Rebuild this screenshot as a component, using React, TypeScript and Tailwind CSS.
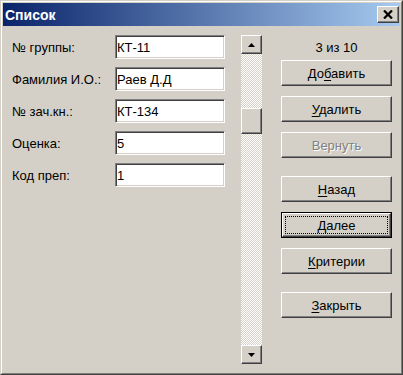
const raised =
  "border border-t-white border-l-white border-r-[#404040] border-b-[#404040] shadow-[inset_-1px_-1px_#808080] bg-[#d4d0c8]";
const sunken =
  "border border-t-[#808080] border-l-[#808080] border-r-white border-b-white shadow-[inset_1px_1px_#404040,inset_-1px_-1px_#d4d0c8] bg-white";

const fields = [
  { label: "№ группы:", value: "КТ-11" },
  { label: "Фамилия И.О.:", value: "Раев Д.Д" },
  { label: "№ зач.кн.:", value: "КТ-134" },
  { label: "Оценка:", value: "5" },
  { label: "Код преп:", value: "1" },
];

function Btn({
  pre,
  key_,
  post,
  mt,
  disabled,
  isDefault,
}: {
  pre: string;
  key_: string;
  post: string;
  mt: string;
  disabled?: boolean;
  isDefault?: boolean;
}) {
  if (isDefault) {
    return (
      <div className={`${mt} h-[26px] w-[111px] border border-black`}>
        <div className={`${raised} h-full w-full p-[2px]`}>
          <div className="h-full w-full border border-dotted border-black flex items-center justify-center">
            <span>
              {pre}
              <span className="underline underline-offset-2">{key_}</span>
              {post}
            </span>
          </div>
        </div>
      </div>
    );
  }
  return (
    <div className={`${raised} ${mt} h-[26px] w-[111px] flex items-center justify-center`}>
      {disabled ? (
        <span className="text-[#808080] [text-shadow:1px_1px_0_#fff]">
          {pre}
          {key_}
          {post}
        </span>
      ) : (
        <span>
          {pre}
          <span className="underline underline-offset-2">{key_}</span>
          {post}
        </span>
      )}
    </div>
  );
}

function Arrow({ up }: { up?: boolean }) {
  return (
    <svg width="7" height="4" viewBox="0 0 7 4">
      {up ? <polygon points="3.5,0 7,4 0,4" fill="#000" /> : <polygon points="0,0 7,0 3.5,4" fill="#000" />}
    </svg>
  );
}

export default function App() {
  return (
    <div className="w-[403px] h-[375px] bg-[#d4d0c8] border border-t-[#d4d0c8] border-l-[#d4d0c8] border-r-[#404040] border-b-[#404040] font-['Liberation_Sans',Arial,sans-serif] text-[13px] text-black leading-none">
      <div className="h-full border border-t-white border-l-white border-r-[#808080] border-b-[#808080] p-px flex flex-col">
        {/* title bar */}
        <div className="h-[23px] flex items-center justify-between pl-[2px] pr-[1px] bg-[linear-gradient(to_right,#0a246a,#a6caf0)]">
          <span className="text-white font-bold text-[14px]">Список</span>
          <div className={`${raised} w-[22px] h-[17px] flex items-center justify-center`}>
            <svg width="10" height="9" viewBox="0 0 10 9">
              <path d="M1 0.5 L9 8.5 M9 0.5 L1 8.5" stroke="#000" strokeWidth="2.2" />
            </svg>
          </div>
        </div>

        {/* body */}
        <div className="flex pt-[9px] pl-[9px]">
          <div className="flex flex-col gap-[8px]">
            {fields.map((f) => (
              <div key={f.label} className="flex items-center h-[24px]">
                <span className="w-[103px]">{f.label}</span>
                <div className={`${sunken} w-[110px] h-[24px] pl-px flex items-center`}>{f.value}</div>
              </div>
            ))}
          </div>

          {/* scrollbar */}
          <div className="ml-[16px] w-[21px] h-[329px] flex flex-col">
            <div className={`${raised} h-[19px] flex items-center justify-center`}>
              <Arrow up />
            </div>
            <div className="flex-1 flex flex-col bg-[repeating-conic-gradient(#ffffff_0_25%,#d4d0c8_0_50%)] bg-[length:2px_2px]">
              <div className="h-[54px]" />
              <div className={`${raised} h-[26px]`} />
            </div>
            <div className={`${raised} h-[19px] flex items-center justify-center`}>
              <Arrow />
            </div>
          </div>

          {/* buttons */}
          <div className="ml-[19px] flex flex-col w-[111px]">
            <div className="h-[25px] flex items-center justify-center">3 из 10</div>
            <Btn pre="До" key_="б" post="авить" mt="mt-0" />
            <Btn pre="" key_="У" post="далить" mt="mt-[10px]" />
            <Btn pre="" key_="В" post="ернуть" mt="mt-[10px]" disabled />
            <Btn pre="" key_="Н" post="азад" mt="mt-[18px]" />
            <Btn pre="" key_="Д" post="алее" mt="mt-[10px]" isDefault />
            <Btn pre="" key_="К" post="ритерии" mt="mt-[10px]" />
            <Btn pre="" key_="З" post="акрыть" mt="mt-[18px]" />
          </div>
        </div>
      </div>
    </div>
  );
}
